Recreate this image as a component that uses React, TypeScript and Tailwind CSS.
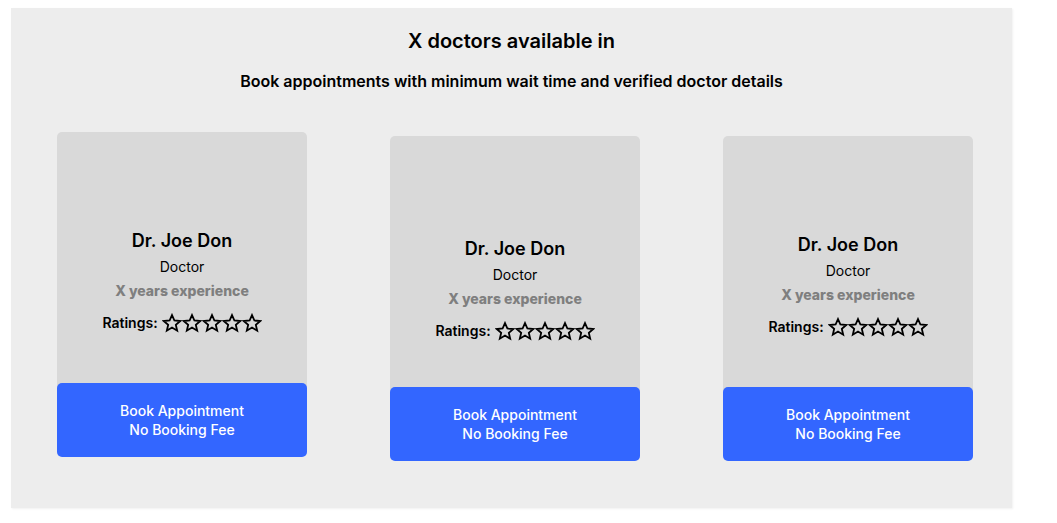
import React from "react";

function Star() {
  return (
    <svg width="20" height="20" viewBox="0 0 24 24" fill="none" stroke="#000" strokeWidth="2.2" strokeLinejoin="miter">
      <polygon points="12,2.5 14.9,9 21.9,9.6 16.6,14.3 18.2,21.2 12,17.5 5.8,21.2 7.4,14.3 2.1,9.6 9.1,9" />
    </svg>
  );
}

function Card({ offset, pad }: { offset: string; pad: string }) {
  return (
    <div className={`w-[250px] flex flex-col ${offset}`}>
      <div className={`h-[256px] -mb-[5px] bg-[#d9d9d9] rounded-t-[5px] flex flex-col items-center ${pad}`}>
        <div className="text-[18px] leading-[24px] font-semibold text-black">Dr. Joe Don</div>
        <div className="mt-[4px] text-[14px] leading-[20px] text-black">Doctor</div>
        <div className="mt-[4px] text-[14px] leading-[20px] font-extrabold text-[#7f7f7f]">X years experience</div>
        <div className="mt-[10px] flex items-center h-[24px]">
          <span className="text-[14px] leading-[20px] font-semibold text-black mr-[4px]">Ratings:</span>
          <Star />
          <Star />
          <Star />
          <Star />
          <Star />
        </div>
      </div>
      <div className="relative h-[74px] bg-[#3366ff] rounded-[5px] flex flex-col items-center justify-center text-white text-[14px] leading-[19px] font-medium">
        <div>Book Appointment</div>
        <div>No Booking Fee</div>
      </div>
    </div>
  );
}

export default function App() {
  return (
    <div className="w-[1057px] h-[523px] bg-white pt-[8px] pl-[11px]" style={{ fontFamily: "Inter, 'Noto Sans', sans-serif" }}>
      <div className="w-[1001px] h-[500px] bg-[#ededed] shadow-[1px_1px_2px_rgba(0,0,0,0.06)] flex flex-col">
        <h1 className="mt-[19px] text-center text-[20px] leading-[28px] font-semibold text-black">X doctors available in</h1>
        <p className="mt-[16px] text-center text-[16px] leading-[20px] font-semibold text-black">
          Book appointments with minimum wait time and verified doctor details
        </p>
        <div className="mt-[41px] pl-[46px] flex items-start gap-[83px]">
          <Card offset="" pad="pt-[97px]" />
          <Card offset="mt-[4px]" pad="pt-[101px]" />
          <Card offset="mt-[4px]" pad="pt-[97px]" />
        </div>
      </div>
    </div>
  );
}
